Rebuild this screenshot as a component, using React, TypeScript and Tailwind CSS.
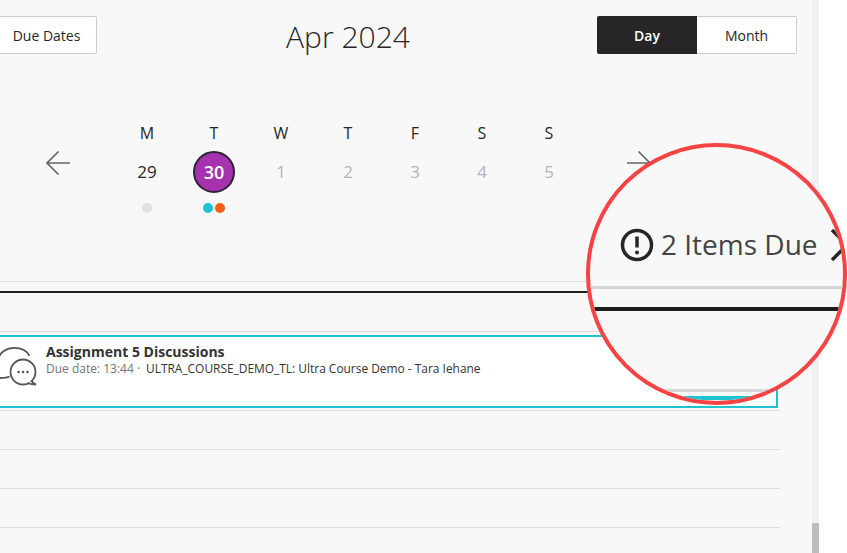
const days = [
  { label: "M", date: "29", dots: ["bg-[#e0e0e0]"], tone: "text-[#262626]" },
  { label: "T", date: "30", dots: ["bg-[#1cc4cf]", "bg-[#f9600f]"], selected: true },
  { label: "W", date: "1", dots: [], tone: "text-[#b5b5b5]" },
  { label: "T", date: "2", dots: [], tone: "text-[#b5b5b5]" },
  { label: "F", date: "3", dots: [], tone: "text-[#b5b5b5]" },
  { label: "S", date: "4", dots: [], tone: "text-[#b5b5b5]" },
  { label: "S", date: "5", dots: [], tone: "text-[#b5b5b5]" },
];

function Arrow({ flip }: { flip?: boolean }) {
  return (
    <svg width="26" height="26" viewBox="0 0 26 26" fill="none" stroke="#666" strokeWidth="1.7" className={flip ? "rotate-180" : ""}>
      <path d="M25 13H2M13.5 1.5L2 13l11.5 11.5" />
    </svg>
  );
}

function DiscussionIcon() {
  return (
    <svg width="38" height="40" viewBox="0 0 38 40" fill="none" stroke="#555" strokeWidth="1.8">
      <path d="M29.500 9C27 3.500 21 0.900 14 0.900 6 0.900 0 6-1 10" />
      <path d="M-1 31c3.500 0 7.500 0 10.500-1.500" />
      <circle cx="23" cy="25" r="12.500" fill="#fff" />
      <path d="M31.500 34c1 1.500 2.500 2.700 4.500 3.500-3 0-6-.5-8.500-1.500" fill="#fff" />
      <circle cx="18.500" cy="25" r="1.300" fill="#555" stroke="none" />
      <circle cx="23" cy="25" r="1.300" fill="#555" stroke="none" />
      <circle cx="27.500" cy="25" r="1.300" fill="#555" stroke="none" />
    </svg>
  );
}

function Rule() {
  return <div className="h-px bg-[#dcdcdc]" />;
}

export default function App() {
  return (
    <div className="relative w-[847px] h-[553px] overflow-hidden bg-white flex font-['Open_Sans',sans-serif] text-[#262626]">
      <div className="w-[812px] h-full bg-[#f8f8f8] pt-4">
        <div className="flex w-[797px]">
          <button className="w-[97px] h-[38px] bg-white border border-l-0 border-[#cdcdcd] rounded-r-[2px] text-[14px] pr-[3px]">
            Due Dates
          </button>
          <h1 className="flex-1 text-center text-[30px] font-light leading-[42px] pl-[2px]">Apr 2024</h1>
          <div className="flex w-[200px] h-[38px] text-[14px]">
            <div className="w-[100px] bg-[#262626] text-white font-semibold rounded-l-[2px] flex items-center justify-center">Day</div>
            <div className="w-[100px] bg-white border border-l-0 border-[#cdcdcd] rounded-r-[2px] flex items-center justify-center">Month</div>
          </div>
        </div>

        <div className="flex items-start h-[220px] mt-[8px]">
          <div className="w-[113.500px] pl-[45px] pt-[84px]">
            <Arrow />
          </div>
          <div className="grid grid-cols-[repeat(7,67px)] pt-[55px]">
            {days.map((d, i) => (
              <div key={i} className="flex flex-col items-center">
                <div className="text-[16px] leading-[24px] h-[24px]">{d.label}</div>
                <div className="h-[42px] mt-[6px] flex items-center justify-center">
                  {d.selected ? (
                    <div className="w-[42px] h-[42px] rounded-full bg-[#a632b0] border-2 border-[#2b2233] text-white font-semibold text-[18px] flex items-center justify-center">
                      {d.date}
                    </div>
                  ) : (
                    <div className={`text-[17px] ${d.tone}`}>{d.date}</div>
                  )}
                </div>
                <div className="flex gap-[2px] mt-[10px] h-[11px]">
                  {d.dots.map((c, j) => (
                    <span key={j} className={`w-[10px] h-[10px] rounded-full ${c}`} />
                  ))}
                </div>
              </div>
            ))}
          </div>
          <div className="pl-[43px] pt-[84px]">
            <Arrow flip />
          </div>
        </div>

        <div className="w-[780px] mt-[-5px]">
          <Rule />
          <div className="h-[2px] bg-[#1d1d1d] mt-[9px]" />
          <div className="h-px bg-[#dcdcdc] mt-[38px]" />
          <div className="w-[778px] h-[73px] mt-[3px] bg-white border-2 border-l-0 border-[#1cc4cf] flex">
            <div className="w-[46px] pt-[10px] shrink-0">
              <DiscussionIcon />
            </div>
            <div className="pt-[5px]">
              <div className="text-[14px] font-bold leading-[19px] text-[#333]">Assignment 5 Discussions</div>
              <div className="text-[12px] leading-[15px] whitespace-nowrap flex">
                <span className="text-[#767676] w-[100px]">Due date: 13:44 ·</span>
                <span className="text-[11.930px] text-[#333]">ULTRA_COURSE_DEMO_TL: Ultra Course Demo - Tara Iehane</span>
              </div>
            </div>
          </div>
          <div className="h-px bg-[#dcdcdc] mt-[2px]" />
          <div className="h-px bg-[#dcdcdc] mt-[38px]" />
          <div className="h-px bg-[#dcdcdc] mt-[38px]" />
          <div className="h-px bg-[#dcdcdc] mt-[38px]" />
        </div>
      </div>

      <div className="w-[7px] h-full bg-[#f1f1f1] flex flex-col justify-end">
        <div className="h-[30px] bg-[#bdbdbd]" />
      </div>

      {/* magnifier callout */}
      <div className="absolute left-[586px] top-[143px] w-[261px] h-[262px] rounded-full border-4 border-[#f64343] bg-[#f8f8f8] overflow-hidden">
        <div className="absolute left-[30px] top-[81px] flex items-center whitespace-nowrap">
          <svg width="34" height="34" viewBox="0 0 34 34" fill="none" stroke="#262626">
            <circle cx="17" cy="17" r="14.500" strokeWidth="3.500" />
            <path d="M17 8.500v11" strokeWidth="3.500" />
            <circle cx="17" cy="24.500" r="2" fill="#262626" stroke="none" />
          </svg>
          <span className="ml-[7px] -mt-[3px] text-[28px] leading-[36px] text-[#444]">2 Items Due</span>
          <svg width="24" height="34" viewBox="0 0 24 34" fill="none" stroke="#262626" strokeWidth="3.500" className="ml-[12px]">
            <path d="M2 2l15 15L2 32" />
          </svg>
        </div>
        <div className="absolute left-0 right-0 top-[139px] h-[3px] bg-[#d6d6d6]" />
        <div className="absolute left-0 right-0 top-[160px] h-[4px] bg-[#1d1d1d]" />
        <div className="absolute left-0 right-0 top-[242px] h-[3px] bg-[#d6d6d6]" />
        <div className="absolute left-0 right-[80px] top-[249px] h-[4px] bg-[#1cc4cf]" />
      </div>
    </div>
  );
}
